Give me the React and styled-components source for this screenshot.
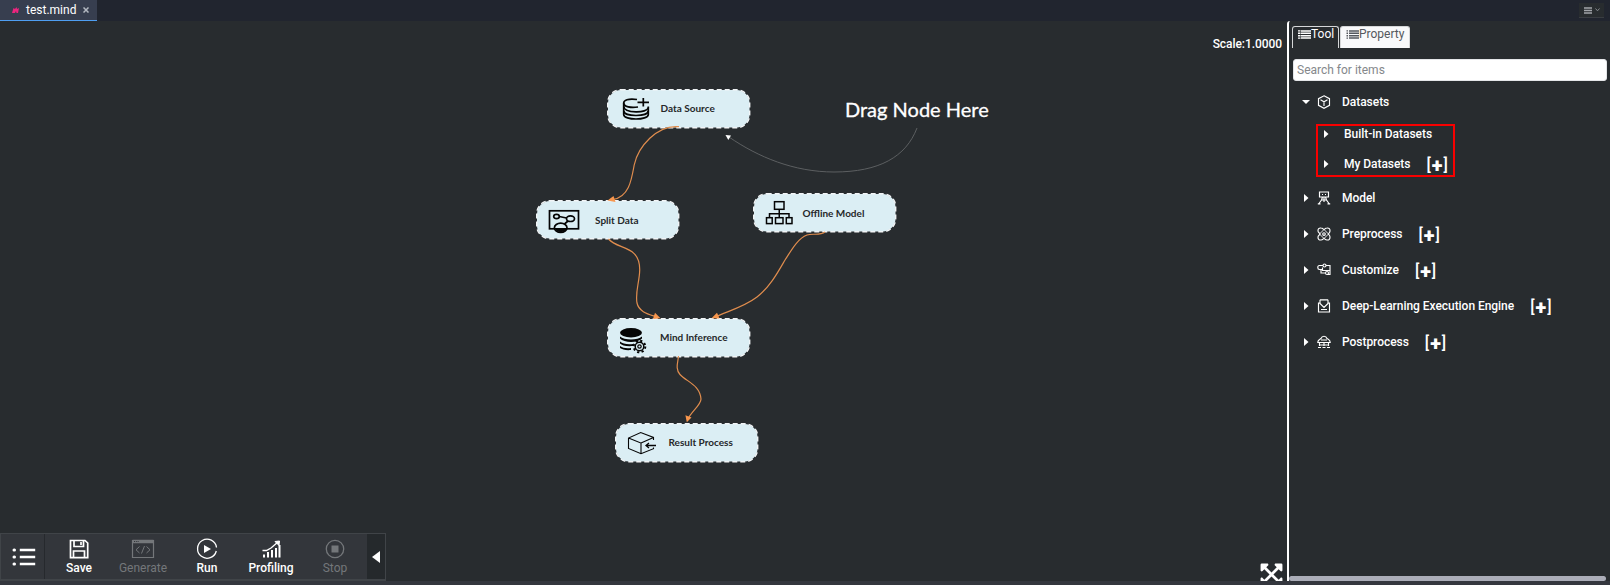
import React from "react";
import styled, { createGlobalStyle } from "styled-components";
import { FaExpandArrowsAlt } from "react-icons/fa";

const GlobalStyle = createGlobalStyle`
  * { box-sizing: border-box; }
  body { margin: 0; background: #282c2f; overflow: hidden; }
`;

const Page = styled.div`
  width: 100vw;
  height: 100vh;
  display: flex;
  flex-direction: column;
  overflow: hidden;
  background: #282c2f;
  color: #fff;
  font: 500 12px/16px Roboto, "Liberation Sans", sans-serif;
`;

const TabBar = styled.header`
  flex: 0 0 21px;
  display: flex;
  justify-content: space-between;
  background: #21252f;
`;

const FileTab = styled.div`
  width: 97px;
  height: 21px;
  display: flex;
  align-items: center;
  padding-left: 12px;
  background: #373e4f;
  border-bottom: 1px solid #4f9ff2;
  line-height: 20px;
`;

const FileName = styled.span`
  width: 50px;
  margin-left: 7px;
  font-weight: 400;
`;

const CloseIcon = styled.svg`
  width: 6px;
  height: 6px;
  margin-left: 7px;
`;

const MenuButton = styled.div`
  width: 25px;
  height: 15px;
  margin: 3px 6px 0 0;
  display: flex;
  align-items: center;
  justify-content: center;
  gap: 3px;
  background: #282c2f;
  border-bottom: 1px solid #3a3d42;
`;

const Workspace = styled.main`
  flex: 1;
  min-height: 0;
  display: flex;
`;

const Canvas = styled.section`
  position: relative;
  width: 1287px;
  overflow: hidden;
`;

const Wires = styled.svg`
  position: absolute;
  inset: 0;
  width: 1287px;
  height: 560px;
  fill: none;
`;

const Node = styled.div`
  position: absolute;
  left: ${(p) => p.$x}px;
  top: ${(p) => p.$y}px;
  width: 143px;
  height: 39px;
  display: flex;
  align-items: center;
  padding-left: 12px;
  color: #26282a;
`;

const NodeOutline = styled.svg`
  position: absolute;
  inset: 0;
  width: 143px;
  height: 39px;
  overflow: visible;
`;

const NodeIcon = styled.svg`
  position: relative;
  width: 32px;
  height: 39px;
  fill: none;
  stroke: #050505;
`;

const NodeLabel = styled.span`
  position: relative;
  margin-left: ${(p) => p.$gap}px;
  font: 700 10px/14px Lato, sans-serif;
  white-space: nowrap;
`;

const DragHint = styled.div`
  position: absolute;
  left: 845px;
  top: 74px;
  font: 400 20px/28px Lato, sans-serif;
  -webkit-text-stroke: 0.3px #fff;
  white-space: nowrap;
`;

const ScaleText = styled.div`
  position: absolute;
  right: 5px;
  top: 15px;
  letter-spacing: -0.06px;
`;

const Expand = styled.div`
  position: absolute;
  left: 1259px;
  top: 541px;
  height: 19px;
  overflow: hidden;
  font-size: 25px;
  line-height: 0;
`;

const Toolbar = styled.nav`
  position: absolute;
  left: 0;
  top: 512px;
  width: 386px;
  height: 48px;
  display: flex;
  background: #33363b;
  border: 1px solid #404448;
  border-bottom-width: 2px;
`;

const MenuCell = styled.div`
  width: 44px;
  display: flex;
  align-items: center;
  justify-content: center;
  padding-left: 2px;
  border-right: 1px solid #26292d;
`;

const Actions = styled.div`
  flex: 1;
  display: flex;
  padding-left: 2px;
`;

const Action = styled.div`
  width: 64px;
  display: flex;
  flex-direction: column;
  align-items: center;
  padding-top: 3px;
  color: ${(p) => (p.$off ? "#74777a" : "#fff")};
  font-weight: ${(p) => (p.$off ? 400 : 500)};
  line-height: 14px;
`;

const ActionIcon = styled.svg`
  width: 24px;
  height: 24px;
  fill: none;
  stroke: currentColor;
`;

const Collapse = styled.div`
  width: 18px;
  display: flex;
  align-items: center;
  justify-content: center;
  background: #25292c;
`;

const Side = styled.aside`
  flex: 1;
  height: 560px;
  display: flex;
  flex-direction: column;
  border-left: 2px solid #fff;
  border-radius: 3px 0 0 0;
  padding: 5px 3px 0 3px;
`;

const SideTabs = styled.div`
  display: flex;
  gap: 1px;
  height: 22px;
`;

const SideTab = styled.div`
  width: ${(p) => p.$w}px;
  height: 22px;
  display: flex;
  padding: 3px 0 0 5px;
  border: 1px solid #d5d7d8;
  border-bottom: 0;
  border-radius: 3px 3px 0 0;
  background: ${(p) => (p.$light ? "#f8f9fa" : "transparent")};
  color: ${(p) => (p.$light ? "#54585d" : "#fff")};
  font-weight: 400;
  line-height: 9px;
`;

const Search = styled.input`
  width: 314px;
  height: 22px;
  flex: none;
  margin: 11px 0 0 1px;
  padding: 0 3px;
  border: 1px solid #e4e6e8;
  border-radius: 3px;
  background: #fff;
  font: 400 12px Roboto, sans-serif;
  outline: none;
  &::placeholder { color: #85888b; opacity: 1; }
`;

const Tree = styled.div`
  padding: 3px 0 0 10px;
  letter-spacing: -0.04px;
`;

const Row = styled.div`
  height: 36px;
  display: flex;
  align-items: center;
`;

const Caret = styled.svg`
  width: 8px;
  height: 8px;
  flex: none;
  fill: #fff;
`;

const TreeIcon = styled.svg`
  width: 14px;
  height: 14px;
  margin: 0 11px 0 7px;
  fill: none;
  stroke: #fff;
  stroke-width: 1.15;
`;

const SubTree = styled.div`
  width: 139px;
  height: 53px;
  margin: 4px 0 3px 14px;
  border: 2px solid #f80000;
  display: flex;
  flex-direction: column;
`;

const SubRow = styled.div`
  display: flex;
  align-items: center;
  flex: none;
  height: ${(p) => p.$h}px;
  padding-left: 4px;
`;

const SubLabel = styled.span`
  margin-left: 14px;
`;

const AddMark = styled.span`
  display: flex;
  align-items: center;
  gap: 1px;
  margin: 2px 0 0 16px;
  font: 500 16px/16px Roboto, sans-serif;
  b { font: 900 20px/16px Roboto, sans-serif; }
`;

const ScrollBar = styled.div`
  width: 317px;
  height: 5px;
  margin: auto 0 0 -3px;
  flex: none;
  border-radius: 3px;
  background: #abadb8;
`;

const Footer = styled.footer`
  flex: 0 0 4px;
  background: #34373e;
`;

const wires = [
  "M679 126.7C657 124.5 638 147 634.2 165C631.5 180 629 197 613 199.5",
  "M608.5 239C618 250 640 245 639.7 270C639.5 282 635 292 637 303C639 312 648 314 657 317",
  "M825 232C820 236 812 233 807 235C797 239 791 251 785 260C778 272 770 287 757 297C744 307 728 311 715 317",
  "M678.5 356C678 362 675 369 680 374.5C687 382 700 385 701 399C701 405 691 412 688 419",
];
const heads = [
  "M607.5 200.500L613.500 196L615.500 202Z",
  "M660.500 318.200L653 319L655 312.800Z",
  "M711.500 318.200L717 312.700L719.500 318.500Z",
  "M686.800 422.200L685.400 415.200L691.500 417.500Z",
];

const nodeArt = {
  source: (
    <g strokeWidth="1.7">
      <path d="M18 10.5C9 9 4.700 11.500 4.700 14V25.500C4.700 31.500 29.300 31.500 29.300 25.500V17.500" />
      <path d="M4.700 14C4.700 18 12 19 19 18M4.700 17.500C5.500 24.500 28.500 24.500 29.300 18.500M4.700 22C6 28 28 28 29.300 22" />
      <path d="M18.500 13.300H30M24.300 9V17.500" />
    </g>
  ),
  split: (
    <g strokeWidth="1.7">
      <rect x="1.500" y="10.800" width="29" height="18" />
      <ellipse cx="8.500" cy="16.500" rx="2.800" ry="2.200" />
      <ellipse cx="22.500" cy="18.700" rx="4" ry="2.800" />
      <path d="M11.300 16.500L18.500 18M20 21L16.500 24" />
      <ellipse cx="12.700" cy="27.800" rx="6.300" ry="4.600" fill="#dbeef4" />
      <path d="M6.500 28H19C18 33.500 8 33.500 6.500 28Z" fill="#050505" stroke="none" />
    </g>
  ),
  model: (
    <g strokeWidth="1.5">
      <rect x="9.500" y="8.700" width="9.500" height="7.600" />
      <path d="M14.250 16.500V24M4.500 24.500V20.700H24V24.500" />
      <rect x="1.500" y="24.700" width="5.700" height="5.900" />
      <rect x="10.500" y="24.700" width="7.500" height="5.900" />
      <rect x="21.300" y="24.700" width="5.700" height="5.900" />
    </g>
  ),
  inference: (
    <g strokeWidth="1.500">
      <ellipse cx="12" cy="14.700" rx="11" ry="4.700" fill="#050505" stroke="none" />
      <path d="M1 18.500C5 22.500 19 22.500 23 18.500V20.500C19 25 5 25 1 20.500Z" fill="#050505" stroke="none" />
      <path d="M1 23.500C4 26 8 26.500 14 26V28C7 28.500 3 27.500 1 25.500ZM1 28C4 30 7 30.500 12 30V32C7 32.500 3 31.500 1 30Z" fill="#050505" stroke="none" />
      <circle cx="20.500" cy="28.500" r="4.300" fill="#dbeef4" />
      <circle cx="20.500" cy="28.500" r="5.800" strokeWidth="2" strokeDasharray="2.200 2.350" />
      <circle cx="20.500" cy="28.500" r="1.700" strokeWidth="1.200" />
    </g>
  ),
  result: (
    <g strokeWidth="1.100">
      <path d="M26.500 17V14.500L13.700 9.500L1.500 15V25.500L14 30.700L26.500 25.700V24.500M1.500 15L14 20V30.700M14 20L26.500 14.500" />
      <path d="M29 22.500H19.500M22 20L19 22.500L22 25" strokeWidth="1.300" />
    </g>
  ),
};

const nodes = [
  { art: "source", x: 607, y: 67.5, gap: 9.5, label: "Data Source" },
  { art: "split", x: 536, y: 179, gap: 15, label: "Split Data" },
  { art: "model", x: 753, y: 172, gap: 5.5, label: "Offline Model" },
  { art: "inference", x: 607, y: 296.5, gap: 9, label: "Mind Inference" },
  { art: "result", x: 615, y: 401.5, gap: 9.5, label: "Result Process" },
];

const treeArt = {
  datasets: <path d="M7 .8L12.500 3.700V10.300L7 13.300L1.500 10.300V3.700ZM3.500 4.800L7 6.800L10.500 4.800M7 6.800V11" />,
  model: <path d="M2.500 1H11.500V6H2.500ZM5 3.500H6M8 3.500H9M5.500 6L4.500 9L2 12.500M8.500 6L9.500 9L12 12.500M7 6V11M4.500 9H9.500M.8 12.800H3.500M10.500 12.800H13.200" />,
  preprocess: (
    <g>
      <path d="M4 1C2 .8.8 2 1 4C1 6 3 6 3 7S1 8 1 10C.8 12 2 13.200 4 13C6 13 6 11.500 7 11.500S8 13 10 13C12 13.200 13.200 12 13 10C13 8 11.500 8 11.500 7S13 6 13 4C13.200 2 12 .8 10 1C8 1 8 2.500 7 2.500S6 1 4 1Z" />
      <path d="M7 2.500L11.500 7L7 11.500L2.500 7Z" strokeWidth=".9" />
      <circle cx="7" cy="7" r="1.300" />
    </g>
  ),
  customize: <path d="M5.500 2.500H2.500C.2 2.500.2 6.500 2.500 6.500H5M9.500 2.500H13V7.500H5.500V4.500M4 6.500V10H8.500M13 7.500V11.500H11.500M6 2.500A1.500 1.500 0 1 0 9 2.500A1.500 1.500 0 1 0 6 2.500M8.500 10A1.500 1.500 0 1 0 11.500 10A1.500 1.500 0 1 0 8.500 10" />,
  engine: <path d="M3 4H1.500V13H12.500V4H11M3 .8H11M3 .8V4.500L7 8.500L11 4.500V.8M4 10.500H10" />,
  postprocess: <path d="M.8 7.500C.5 5 3 4.500 4 3.500C5 .5 9 .5 10 3.500C11.500 4.500 13.500 5 13.200 7.500ZM4 5H10M2.500 10H11.500M2.500 8V11M7 7.500V11M11.500 8V11M1 12.500H4M5.500 12.500H8.500M10 12.500H13" />,
};

const rows = [
  { art: "model", label: "Model" },
  { art: "preprocess", label: "Preprocess", add: true },
  { art: "customize", label: "Customize", add: true },
  { art: "engine", label: "Deep-Learning Execution Engine", add: true },
  { art: "postprocess", label: "Postprocess", add: true },
];

const Right = () => <Caret viewBox="0 0 8 8"><path d="M2 0L6.500 4L2 8Z" /></Caret>;
const Add = () => <AddMark>[<b>+</b>]</AddMark>;

function ListIcon({ color, bullets }) {
  return (
    <svg width="13" height="9" viewBox="0 0 13 9" stroke={color}>
      <path d="M3 .9H13M3 3.300H13M3 5.700H13M3 8.100H13" strokeWidth="1.500" />
      <path d={bullets ? "M.5 .9H2M.5 3.300H2M.5 5.700H2M.5 8.100H2" : "M0 .9H2.500M0 3.300H2.500M0 5.700H2.500M0 8.100H2.500"} strokeWidth="1.400" />
    </svg>
  );
}

const actions = [
  { label: "Save", art: <g strokeWidth="1.700"><path d="M3.500 3.500H18L20.700 6V20.700H3.500ZM7 3.500V9.500H16.500V3.500M6.500 20.500V14H17.500V20.500" /><path d="M14 5V8" /></g> },
  { label: "Generate", off: true, art: <g><path d="M1.500 3.500H22.500V20.500H1.500Z" strokeWidth="1.200" /><path d="M1.500 4.500H22.500" strokeWidth="3.500" /><path d="M3 4.500H8" stroke="#33363b" strokeDasharray="1.200 1" /><path d="M8.500 9.500L5 12.800L8.500 16M15.500 9.500L19 12.800L15.500 16M13.500 9L10.500 16.500" /></g> },
  { label: "Run", art: <g><path d="M21.500 10.500A9.500 9.500 0 1 0 21.300 14" strokeWidth="1.300" /><path d="M9 8L16 12L9 16Z" fill="currentColor" stroke="none" /></g> },
  { label: "Profiling", art: <g><path d="M5 20.500V17.500M9 20.500V15M13 20.500V13M17 20.500V11M20.500 20.500V8" strokeWidth="2" /><path d="M3.500 13.500H7.500L12 11L19 5" strokeWidth="1.400" /><path d="M16 4.500L20.500 4L20 8.500Z" fill="currentColor" /></g> },
  { label: "Stop", off: true, art: <g><circle cx="12" cy="12" r="8.700" strokeWidth="1.300" /><path d="M8.500 8.500H15.500V15.500H8.500Z" fill="currentColor" stroke="none" /></g> },
];

export default function App() {
  return (
    <Page>
      <GlobalStyle />
      <TabBar>
        <FileTab>
          <svg width="7" height="6" viewBox="0 0 7 6"><path d="M0 6L1.500 1L3 2L4.500 0L5 2L7 1L6 6H4.500L4 4L3 6Z" fill="#ed257f" /></svg>
          <FileName>test.mind</FileName>
          <CloseIcon viewBox="0 0 6 6"><path d="M.5 .5L5.500 5.500M5.500 .5L.5 5.500" stroke="#b4b9c2" strokeWidth="1.500" /></CloseIcon>
        </FileTab>
        <MenuButton>
          <svg width="8" height="7" stroke="#a2a5aa" strokeWidth="1.500"><path d="M0 1H8M0 3.500H8M0 6H8" /></svg>
          <svg width="5" height="4" fill="none" stroke="#85888d"><path d="M.5 .5L2.500 2.800L4.500 .5" /></svg>
        </MenuButton>
      </TabBar>
      <Workspace>
        <Canvas>
          {nodes.map((n) => (
            <Node key={n.label} $x={n.x} $y={n.y}>
              <NodeOutline>
                <rect x="1" y="1" width="141.500" height="37.500" rx="13" fill="#dbeef4" />
                <rect x=".7" y=".7" width="142" height="38" rx="13" fill="none" stroke="#f1f4f6" strokeDasharray="5 3" strokeWidth="1.400" />
              </NodeOutline>
              <NodeIcon viewBox="0 0 32 39">{nodeArt[n.art]}</NodeIcon>
              <NodeLabel $gap={n.gap}>{n.label}</NodeLabel>
            </Node>
          ))}
          <Wires viewBox="0 21 1287 560">
            {wires.map((d) => <path key={d} d={d} stroke="#e08d4e" strokeWidth="1.200" />)}
            {heads.map((d) => <path key={d} d={d} fill="#f7964d" />)}
            <path d="M917 128C906 157 879 172 834 172C794 172 758 157 729 137" stroke="#5c5f61" />
            <path d="M725.500 135L731 135.500L728.300 140Z" fill="#fff" />
          </Wires>
          <DragHint>Drag Node Here</DragHint>
          <ScaleText>Scale:1.0000</ScaleText>
          <Expand><FaExpandArrowsAlt /></Expand>
          <Toolbar>
            <MenuCell>
              <svg width="24" height="18" viewBox="0 0 24 18" stroke="#fff" strokeWidth="2.500" strokeLinecap="round"><path d="M2 2H2.500M2 9H2.500M2 16H2.500" strokeWidth="3" /><path d="M9 2H22M9 9H22M9 16H22" strokeLinecap="square" strokeWidth="2.400" /></svg>
            </MenuCell>
            <Actions>
              {actions.map((a) => (
                <Action key={a.label} $off={a.off}>
                  <ActionIcon viewBox="0 0 24 24">{a.art}</ActionIcon>
                  {a.label}
                </Action>
              ))}
            </Actions>
            <Collapse><svg width="8" height="12"><path d="M8 0V12L0 6Z" fill="#fff" /></svg></Collapse>
          </Toolbar>
        </Canvas>
        <Side>
          <SideTabs>
            <SideTab $w={47}><ListIcon color="#fff" />Tool</SideTab>
            <SideTab $w={70} $light><ListIcon color="#54585d" bullets />Property</SideTab>
          </SideTabs>
          <Search placeholder="Search for items" />
          <Tree>
            <Row>
              <Caret viewBox="0 0 8 8"><path d="M0 2H8L4 6Z" /></Caret>
              <TreeIcon viewBox="0 0 14 14">{treeArt.datasets}</TreeIcon>
              Datasets
            </Row>
            <SubTree>
              <SubRow $h={16}><Right /><SubLabel>Built-in Datasets</SubLabel></SubRow>
              <SubRow $h={44}><Right /><SubLabel>My Datasets</SubLabel><Add /></SubRow>
            </SubTree>
            {rows.map((r) => (
              <Row key={r.label}>
                <Right />
                <TreeIcon viewBox="0 0 14 14">{treeArt[r.art]}</TreeIcon>
                {r.label}
                {r.add && <Add />}
              </Row>
            ))}
          </Tree>
          <ScrollBar />
        </Side>
      </Workspace>
      <Footer />
    </Page>
  );
}
